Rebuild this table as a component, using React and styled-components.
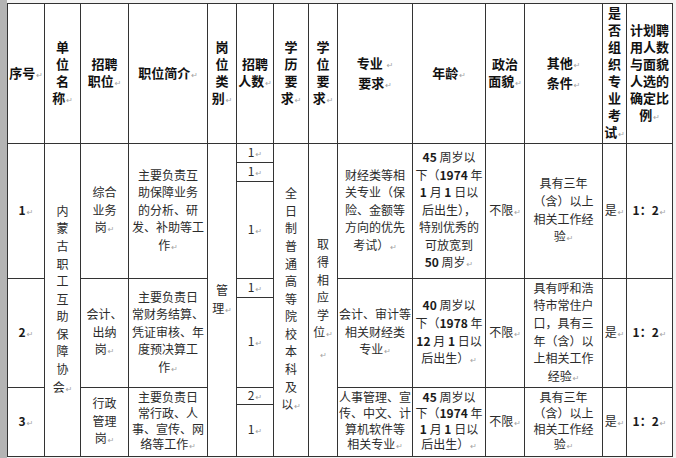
import React from 'react';
import styled, { createGlobalStyle } from 'styled-components';

const GlobalStyle = createGlobalStyle`
  body {
    margin: 0;
    background: #ffffff;
  }
`;

const Page = styled.div`
  display: flex;
  width: 676px;
  height: 458px;
  overflow: hidden;
  background: #ffffff;
`;

const Gutter = styled.div`
  width: 7px;
  flex-shrink: 0;
  background: #b4b4b4;
`;

const Sheet = styled.div`
  flex: 1;
  padding-top: 3px;
  background: #f4f4f4;
`;

const Table = styled.div`
  display: grid;
  width: max-content;
  grid-template-columns: 36px 35px 47px 78px 28px 36px 34px 28px 74px 72px 38px 77px 23px 45px;
  grid-template-rows: 139px 18px 18px 96px 18px 89px 16px 51px;
  gap: 1px;
  padding: 1px;
  background: #333333;
  font-family: "Noto Sans CJK SC", "Noto Sans", sans-serif;
`;

const Cell = styled.div`
  grid-row: span ${(p) => p.$rows || 1};
  display: flex;
  flex-direction: column;
  align-items: center;
  justify-content: center;
  text-align: center;
  overflow: hidden;
  background: #ffffff;
  color: ${(p) => (p.$head ? '#111111' : '#2b2b2b')};
  font-size: ${(p) => (p.$head ? '13px' : '12px')};
  font-weight: ${(p) => (p.$head ? 700 : 400)};
  line-height: ${(p) => (p.$head ? '17px' : p.$tight ? '15.6px' : '17.6px')};
`;

const Line = styled.div`
  white-space: nowrap;
`;

const Mark = styled.span`
  margin-left: 1px;
  font-family: "DejaVu Sans", sans-serif;
  font-size: 8px;
  font-weight: 400;
  color: #a3a3a3;
`;

const Num = styled.b`
  font-weight: 700;
  color: #1a1a1a;
`;

// '¶' stands for the Word paragraph mark shown after a line
const header = [
  ['序号¶'],
  ['单', '位', '名', '称¶'],
  ['招聘', '职位¶'],
  ['职位简介¶'],
  ['岗', '位', '类', '别¶'],
  ['招聘', '人数¶'],
  ['学', '历', '要', '求¶'],
  ['学', '位', '要', '求¶'],
  ['专业 ¶', '要求¶'],
  ['年龄¶'],
  ['政治', '面貌¶'],
  ['其他¶', '条件¶'],
  ['是', '否', '组', '织', '专', '业', '考', '试¶'],
  ['计划聘', '用人数', '与面貌', '人选的', '确定比', '例¶'],
];

const column = (text) => text.split('').map((c, i, a) => (i === a.length - 1 ? c + '¶' : c));

const rows = [
  // row 1
  { rows: 3, bold: true, lines: ['1¶'] },
  { rows: 7, lines: column('内蒙古职工互助保障协会') },
  { rows: 3, lines: ['综合', '业务', '岗¶'] },
  { rows: 3, lines: ['主要负责互', '助保障业务', '的分析、研', '发、补助等工', '作¶'] },
  { rows: 7, lines: ['管', '理¶'] },
  { rows: 1, tight: true, lines: ['1¶'] },
  { rows: 7, lines: column('全日制普通高等院校本科及以') },
  { rows: 7, lines: ['取', '得', '相', '应', '学', '位¶', '¶'] },
  { rows: 3, lines: ['财经类等相', '关专业（保', '险、金额等', '方向的优先', '考试）¶'] },
  { rows: 3, bold: true, lines: ['45 周岁以', '下（1974 年', '1 月 1 日以', '后出生），', '特别优秀的', '可放宽到', '50 周岁¶'] },
  { rows: 3, lines: ['不限¶'] },
  { rows: 3, lines: ['具有三年', '（含）以上', '相关工作经', '验¶'] },
  { rows: 3, lines: ['是¶'] },
  { rows: 3, bold: true, lines: ['1：2¶'] },
  { rows: 1, tight: true, lines: ['1¶'] },
  { rows: 1, lines: ['1¶'] },
  // row 2
  { rows: 2, bold: true, lines: ['2¶'] },
  { rows: 2, lines: ['会计、', '出纳', '岗¶'] },
  { rows: 2, lines: ['主要负责日', '常财务结算、', '凭证审核、年', '度预决算工', '作¶'] },
  { rows: 1, tight: true, lines: ['1¶'] },
  { rows: 2, lines: ['会计、审计等', '相关财经类', '专业¶'] },
  { rows: 2, bold: true, lines: ['40 周岁以', '下（1978 年', '12 月 1 日以', '后出生）¶'] },
  { rows: 2, lines: ['不限¶'] },
  { rows: 2, lines: ['具有呼和浩', '特市常住户', '口，具有三', '年（含）以', '上相关工作', '经验¶'] },
  { rows: 2, lines: ['是¶'] },
  { rows: 2, bold: true, lines: ['1：2¶'] },
  { rows: 1, lines: ['1¶'] },
  // row 3
  { rows: 2, bold: true, lines: ['3¶'] },
  { rows: 2, lines: ['行政', '管理', '岗¶'] },
  { rows: 2, tight: true, lines: ['主要负责日', '常行政、人', '事、宣传、网', '络等工作¶'] },
  { rows: 1, tight: true, lines: ['2¶'] },
  { rows: 2, tight: true, lines: ['人事管理、宣', '传、中文、计', '算机软件等', '相关专业¶'] },
  { rows: 2, tight: true, bold: true, lines: ['45 周岁以', '下（1974 年', '1 月 1 日以', '后出生）¶'] },
  { rows: 2, lines: ['不限¶'] },
  { rows: 2, tight: true, lines: ['具有三年', '（含）以上', '相关工作经', '验¶'] },
  { rows: 2, lines: ['是¶'] },
  { rows: 2, bold: true, lines: ['1：2¶'] },
  { rows: 1, lines: ['1¶'] },
];

function renderText(text, bold) {
  const parts = text.split(/(\d+|¶|：)/).filter(Boolean);
  return parts.map((part, i) => {
    if (part === '¶') return <Mark key={i}>↵</Mark>;
    if (bold && (/^\d+$/.test(part) || part === '：')) return <Num key={i}>{part}</Num>;
    return <React.Fragment key={i}>{part}</React.Fragment>;
  });
}

function TableCell({ lines, rows, head, bold, tight }) {
  return (
    <Cell $rows={rows} $head={head} $tight={tight}>
      {lines.map((l, i) => (
        <Line key={i}>{renderText(l, bold)}</Line>
      ))}
    </Cell>
  );
}

export default function App() {
  return (
    <Page>
      <GlobalStyle />
      <Gutter />
      <Sheet>
        <Table>
          {header.map((lines, i) => (
            <TableCell key={'h' + i} head lines={lines} />
          ))}
          {rows.map((c, i) => (
            <TableCell key={'r' + i} lines={c.lines} rows={c.rows} bold={c.bold} tight={c.tight} />
          ))}
        </Table>
      </Sheet>
    </Page>
  );
}
